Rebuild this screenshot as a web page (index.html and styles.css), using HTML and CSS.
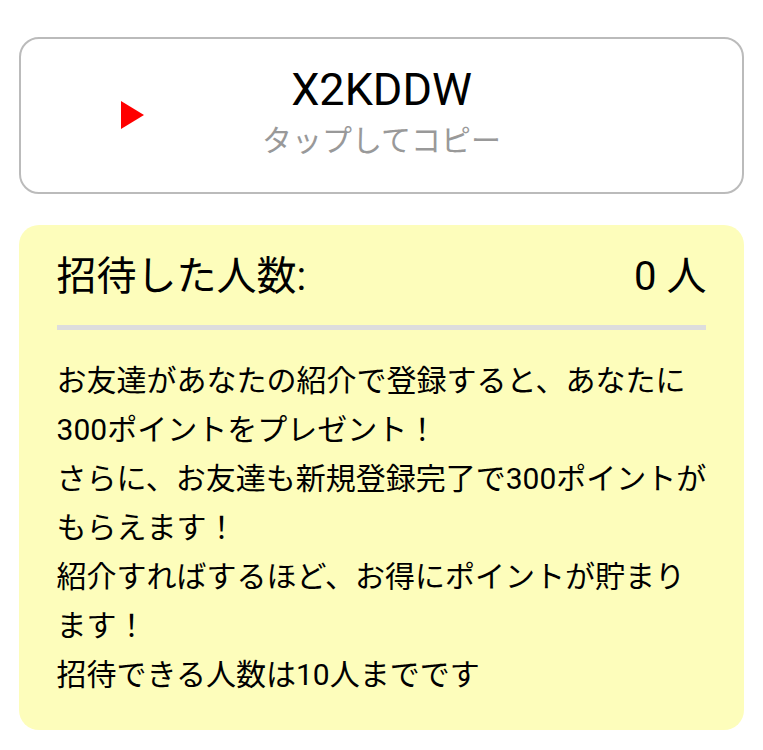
FILE: index.html
```html
<!DOCTYPE html>
<html lang="ja">

<head>
    <meta charset="UTF-8">
    <meta name="viewport" content="width=device-width, initial-scale=1.0">
    <title>友達招待</title>
    <link rel="stylesheet" href="styles.css">
</head>

<body>
    <div class="container">
        <!-- 招待コード -->
        <div class="code-box">
            <span class="code-arrow"></span>
            <div class="code-text">
                <div class="code">X2KDDW</div>
                <div class="code-hint">タップしてコピー</div>
            </div>
        </div>

        <!-- 招待状況 -->
        <div class="invite-box">
            <div class="invite-header">
                <span>招待した人数:</span>
                <span>0 人</span>
            </div>
            <div class="divider"></div>
            <p class="invite-desc">
                お友達があなたの紹介で登録すると、あなたに300ポイントをプレゼント！<br>
                さらに、お友達も新規登録完了で300ポイントがもらえます！<br>
                紹介すればするほど、お得にポイントが貯まります！<br>
                招待できる人数は10人までです
            </p>
        </div>
    </div>
</body>

</html>
```

FILE: styles.css
```css
body {
    font-family: Roboto, "Noto Sans CJK JP", sans-serif;
    margin: 0;
    padding: 0;
    background-color: #fff;
    color: #000;
}

.container {
    width: 95%;
    margin: 0 auto;
    padding-top: 37px;
}

/* 招待コード */
.code-box {
    display: grid;
    grid-template-columns: 1fr auto 1fr;
    align-items: center;
    border: 2px solid #bbb;
    border-radius: 20px;
    padding: 24px 0 26px;
    cursor: pointer;
}

.code-arrow {
    justify-self: start;
    margin-left: 100px;
    width: 0;
    height: 0;
    border-left: 23px solid #f00;
    border-top: 14.5px solid transparent;
    border-bottom: 14.5px solid transparent;
}

.code-text {
    text-align: center;
}

.code {
    font-size: 45px;
    line-height: 53px;
}

.code-hint {
    font-size: 30px;
    line-height: 50px;
    color: #999;
}

/* 招待状況 */
.invite-box {
    margin-top: 31px;
    background-color: #fdfdbb;
    border-radius: 20px;
    padding: 23px 37.5px 31px;
}

.invite-header {
    display: flex;
    justify-content: space-between;
    font-size: 40px;
    line-height: 57px;
}

.divider {
    height: 5px;
    background-color: #ddd;
    margin-top: 20px;
}

.invite-desc {
    font-size: 30px;
    line-height: 49px;
    margin: 26px 0 0;
}
```
